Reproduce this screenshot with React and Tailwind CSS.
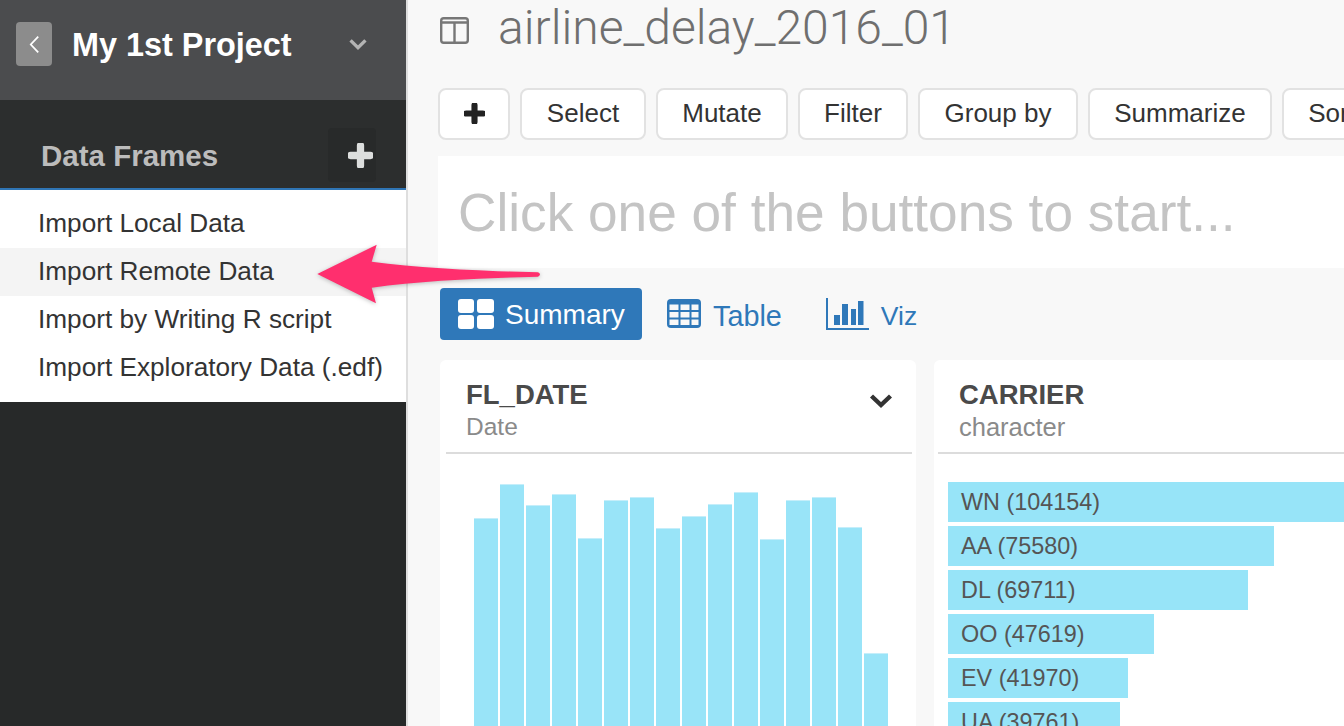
const font = { fontFamily: '"Liberation Sans", Arial, sans-serif' };

const heights = [208, 242, 221, 232, 188, 226, 229, 198, 210, 222, 234, 187, 226, 229, 199, 73];
const carriers = [
  ['WN (104154)', 'w-full'],
  ['AA (75580)', 'w-[326px]'],
  ['DL (69711)', 'w-[300px]'],
  ['OO (47619)', 'w-[206px]'],
  ['EV (41970)', 'w-[180px]'],
  ['UA (39761)', 'w-[172px]'],
];
const menu = ['Import Local Data', 'Import Remote Data', 'Import by Writing R script', 'Import Exploratory Data (.edf)'];
const tools = [
  ['Select', 'w-[126px]'],
  ['Mutate', 'w-[132px]'],
  ['Filter', 'w-[110px]'],
  ['Group by', 'w-[160px]'],
  ['Summarize', 'w-[184px]'],
  ['Sort', 'w-[100px]'],
];

function Plus({ className, color = 'currentColor' }) {
  return (
    <svg viewBox="0 0 24 24" className={className}>
      <path d="M12 2.5v19M2.5 12h19" stroke={color} strokeWidth="7" strokeLinecap="round" fill="none" />
    </svg>
  );
}

function Sidebar() {
  return (
    <aside className="w-[406px] shrink-0 h-full flex flex-col bg-[#272929]">
      <div className="h-[100px] shrink-0 bg-[#4b4c4e] flex items-start pt-[22px] pl-4 pr-[38px]">
        <div className="w-9 h-11 rounded bg-[#8c8c8c] flex items-center justify-center">
          <svg viewBox="0 0 14 20" className="w-[13px] h-[19px]">
            <path d="M11 1.5 L3 10 L11 18.5" stroke="#fff" strokeWidth="1.9" fill="none" />
          </svg>
        </div>
        <div className="ml-5 text-[32.4px] leading-[46px] font-bold text-white whitespace-nowrap">My 1st Project</div>
        <svg viewBox="0 0 20 14" className="ml-auto mt-[16px] w-[20px] h-[13px]">
          <path d="M2 2.5 L10 10.5 L18 2.5" stroke="#b4b4b4" strokeWidth="3.6" fill="none" />
        </svg>
      </div>
      <div className="h-[90px] shrink-0 bg-[#2c2e2e] border-b-2 border-[#2f75b5] flex items-start pl-[41px] pr-[30px] pt-[28px]">
        <div className="mt-[7px] text-[29.5px] leading-[42px] font-bold text-[#bcbcbc] whitespace-nowrap">Data Frames</div>
        <div className="ml-auto w-12 h-[54px] rounded bg-[#282a2a] flex items-center justify-end pr-[3px]">
          <Plus className="w-[25px] h-[25px]" color="#dcdedd" />
        </div>
      </div>
      <ul className="bg-white pt-[10px] pb-[10px] shrink-0">
        {menu.map((m, i) => (
          <li key={m} className={`h-12 pl-[38px] text-[26.2px] leading-[46px] text-[#333] whitespace-nowrap ${i === 1 ? 'bg-[#f4f4f4]' : ''}`}>
            {m}
          </li>
        ))}
      </ul>
    </aside>
  );
}

function Toolbar() {
  return (
    <div className="flex gap-[10px] h-[52px] -ml-[2px]">
      <button className="w-[72px] shrink-0 bg-white border-2 border-[#e2e2e2] rounded-lg flex items-center justify-center pb-[2px]">
        <Plus className="w-[21px] h-[21px]" color="#222" />
      </button>
      {tools.map(([t, w]) => (
        <button key={t} className={`${w} shrink-0 bg-white border-2 border-[#e2e2e2] rounded-lg text-[26px] text-[#333] pb-[2px]`}>
          {t}
        </button>
      ))}
    </div>
  );
}

function Tabs() {
  return (
    <div className="flex items-center h-[52px] mt-5">
      <div className="w-[202px] h-[52px] bg-[#2f78b9] rounded flex items-center pl-[18px] text-white text-[28px]">
        <svg viewBox="0 0 36 30" className="w-[36px] h-[30px] mr-[11px]" fill="#fff">
          <rect x="0" y="0" width="16" height="14" rx="3" />
          <rect x="19" y="0" width="17" height="14" rx="3" />
          <rect x="0" y="16" width="16" height="14" rx="3" />
          <rect x="19" y="16" width="17" height="14" rx="3" />
        </svg>
        <span className="mt-[2px]">Summary</span>
      </div>
      <div className="flex items-center ml-[25px] text-[28.8px] text-[#2f78b9]">
        <svg viewBox="0 0 34 29" className="w-[34px] h-[29px] mr-3 -mt-[2px]">
          <rect x="0" y="0" width="34" height="29" rx="4" fill="#2f78b9" />
          <g fill="#f8f8f8">
            <rect x="2.5" y="5.5" width="9" height="5.5" />
            <rect x="13.5" y="5.5" width="9" height="5.5" />
            <rect x="24.5" y="5.5" width="7" height="5.5" />
            <rect x="2.5" y="13" width="9" height="5.5" />
            <rect x="13.5" y="13" width="9" height="5.5" />
            <rect x="24.5" y="13" width="7" height="5.5" />
            <rect x="2.5" y="20.5" width="9" height="5.5" />
            <rect x="13.5" y="20.5" width="9" height="5.5" />
            <rect x="24.5" y="20.5" width="7" height="5.5" />
          </g>
        </svg>
        <span className="mt-[6px]">Table</span>
      </div>
      <div className="flex items-center ml-[44px] text-[26.5px] text-[#2f78b9]">
        <svg viewBox="0 0 43 32" className="w-[43px] h-[32px] mr-3" fill="#2f78b9">
          <rect x="0" y="0" width="2" height="32" />
          <rect x="0" y="30" width="43" height="2" />
          <rect x="8" y="17" width="6" height="10" />
          <rect x="16" y="6" width="6" height="21" />
          <rect x="25" y="11" width="5" height="16" />
          <rect x="32" y="3" width="5.5" height="24" />
        </svg>
        <span className="mt-[6px]">Viz</span>
      </div>
    </div>
  );
}

function Card({ title, sub, subSize, chevron, className, headClass, children }) {
  return (
    <section className={`${className} shrink-0 bg-white rounded-md pr-1`}>
      <div className={`${headClass} h-[94px] border-b-2 border-[#dcdcdc] pr-5 pt-[18px] flex justify-between`}>
        <div>
          <div className="text-[27.5px] leading-[34px] font-bold text-[#4a4a4a]">{title}</div>
          <div className={`${subSize} leading-[30px] text-[#8a8a8a]`}>{sub}</div>
        </div>
        {chevron && (
          <svg viewBox="0 0 24 16" className="w-[24px] h-[16px] mt-[15px] -mr-[1px]">
            <path d="M2.5 3 L12 12 L21.5 3" stroke="#333" strokeWidth="4.4" fill="none" />
          </svg>
        )}
      </div>
      {children}
    </section>
  );
}

function Main() {
  return (
    <main className="flex-1 min-w-0 h-full overflow-hidden border-l-2 border-[#dedede] bg-[#f8f8f8] pl-[32px] relative">
      <div className="h-[88px] flex items-start pt-[3px]">
        <svg viewBox="0 0 29 27" className="w-[29px] h-[27px] mt-[14px] shrink-0">
          <rect x="1.2" y="1.2" width="26.6" height="24.6" rx="2.5" fill="none" stroke="#777" strokeWidth="2.4" />
          <path d="M1 5.5 H28 M14.5 6 V26" stroke="#777" strokeWidth="2.4" fill="none" />
        </svg>
        <div className="ml-[29px] text-[48px] leading-[50px] font-light text-[#6f6f6f] whitespace-nowrap" style={{ fontFamily: 'Roboto, sans-serif' }}>
          airline_delay_2016_01
        </div>
      </div>
      <Toolbar />
      <div className="mt-4 -ml-[2px] h-[112px] bg-white pl-[20px] text-[53.2px] leading-[114px] text-[#c4c4c4] whitespace-nowrap">
        Click one of the buttons to start...
      </div>
      <Tabs />
      <div className="flex gap-[18px] mt-5">
        <Card title="FL_DATE" sub="Date" subSize="text-[24.5px]" chevron className="w-[476px] pl-[6px]" headClass="pl-5">
          <div className="h-[400px] pt-[30px] pl-[28px] flex items-start">
            <div className="flex items-end gap-[2px] h-[242px]">
              {heights.map((h, i) => (
                <div key={i} className="w-6 bg-[#99e4f8] border-t border-[#c5eefa]" style={{ height: h }} />
              ))}
            </div>
          </div>
        </Card>
        <Card title="CARRIER" sub="character" subSize="text-[25.5px]" className="w-[600px] pl-1" headClass="pl-[21px]">
          <div className="pt-7 pl-[10px] pr-[180px] flex flex-col gap-1">
            {carriers.map(([c, w]) => (
              <div key={c} className={`${w} h-10 bg-[#97e4f8] pl-[13px] text-[23.4px] leading-[40px] text-[#555] whitespace-nowrap`}>
                {c}
              </div>
            ))}
          </div>
        </Card>
      </div>
    </main>
  );
}

export default function App() {
  return (
    <div className="relative w-[1344px] h-[726px] overflow-hidden flex" style={font}>
      <Sidebar />
      <Main />
      <svg viewBox="0 0 240 80" className="absolute left-[310px] top-[240px] w-[240px] h-[80px]" style={{ filter: 'drop-shadow(0 1px 2px rgba(0,0,0,0.25))' }}>
        <path d="M7.3 34 L66.7 4.7 L61.7 21.7 C110 28 170 31 228 32.3 Q232 34.5 228 36.7 C170 38 110 41 61.7 47.7 L66 63.3 Z" fill="#ff2f6e" />
      </svg>
    </div>
  );
}
